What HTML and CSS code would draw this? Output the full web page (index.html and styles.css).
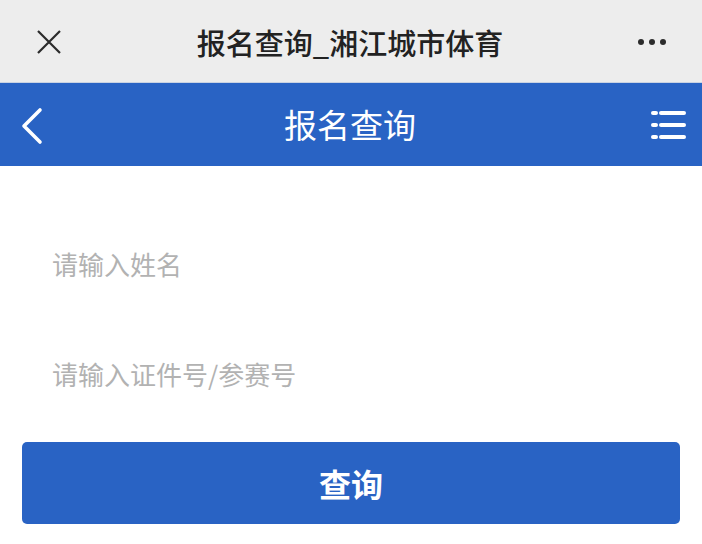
FILE: index.html
```html
<!DOCTYPE html>
<html lang="zh-CN">
<head>
    <meta charset="UTF-8">
    <meta name="viewport" content="width=device-width, initial-scale=1.0">
    <title>报名查询_湘江城市体育</title>
    <link rel="stylesheet" href="styles.css">
</head>
<body>
    <div class="wx-bar">
        <span class="wx-close">
            <svg width="26" height="26" viewBox="0 0 26 26">
                <path d="M2 2 L24 24 M24 2 L2 24" stroke="#2b2b2b" stroke-width="2.2" fill="none"/>
            </svg>
        </span>
        <span class="wx-title">报名查询_湘江城市体育</span>
        <span class="wx-more">
            <i></i><i></i><i></i>
        </span>
    </div>

    <header class="top-nav">
        <a class="nav-back">
            <svg width="24" height="38" viewBox="0 0 24 38">
                <polyline points="19,3 3,19 19,35" stroke="#fff" stroke-width="3.6" stroke-linecap="round" stroke-linejoin="round" fill="none"/>
            </svg>
        </a>
        <h1>报名查询</h1>
        <a class="nav-menu">
            <svg width="36" height="30" viewBox="0 0 36 30">
                <g stroke="#fff" stroke-width="4" stroke-linecap="round">
                    <line x1="2" y1="3" x2="5" y2="3"/>
                    <line x1="10" y1="3" x2="33" y2="3"/>
                    <line x1="2" y1="15" x2="5" y2="15"/>
                    <line x1="10" y1="15" x2="33" y2="15"/>
                    <line x1="2" y1="27" x2="5" y2="27"/>
                    <line x1="10" y1="27" x2="33" y2="27"/>
                </g>
            </svg>
        </a>
    </header>

    <form class="query-form">
        <input class="field" type="text" placeholder="请输入姓名">
        <input class="field" type="text" placeholder="请输入证件号/参赛号">
        <button type="button" class="btn-query">查询</button>
    </form>
</body>
</html>
```

FILE: styles.css
```css
:root {
    --wx-bg: #ededed;
    --main-blue: #2963c4;
    --text-dark: #222;
    --placeholder: #b2b2b2;
    --font-family: "Noto Sans CJK SC", "Noto Sans", sans-serif;
}

* {
    box-sizing: border-box;
}

body {
    margin: 0;
    background: #fff;
    font-family: var(--font-family);
    width: 702px;
    height: 544px;
    overflow: hidden;
}

/* 微信顶部栏 */
.wx-bar {
    height: 83px;
    background: var(--wx-bg);
    border-bottom: 1px solid #c9d3e3;
    display: flex;
    align-items: center;
    justify-content: space-between;
    padding: 0 30px 0 36px;
}

.wx-close {
    display: flex;
    width: 26px;
    height: 26px;
    margin-top: 2px;
}

.wx-title {
    font-size: 29px;
    line-height: 1;
    color: var(--text-dark);
    font-weight: 500;
    margin: 2px 0 0 0;
}

.wx-more {
    display: flex;
    gap: 5px;
    width: 34px;
    margin-top: 2px;
}

.wx-more i {
    width: 6px;
    height: 6px;
    border-radius: 50%;
    background: #2b2b2b;
}

/* 页面导航 */
.top-nav {
    height: 83px;
    background: var(--main-blue);
    display: flex;
    align-items: center;
    justify-content: space-between;
    padding: 0 15px 0 21px;
}

.nav-back {
    display: flex;
    margin-top: 2px;
}

.top-nav h1 {
    margin: 0 0 0 4px;
    font-size: 33px;
    line-height: 1;
    font-weight: 400;
    color: #fff;
}

.nav-menu {
    display: flex;
    margin-top: 1px;
}

/* 查询表单 */
.query-form {
    display: flex;
    flex-direction: column;
    padding: 42px 22px 0;
}

.field {
    height: 110px;
    border: none;
    outline: none;
    padding: 0 0 0 30px;
    font-size: 26px;
    font-family: var(--font-family);
    color: var(--text-dark);
    background: transparent;
}

.field::placeholder {
    color: var(--placeholder);
}

.btn-query {
    margin-top: 14px;
    height: 82px;
    border: none;
    border-radius: 5px;
    background: var(--main-blue);
    color: #fff;
    font-size: 32px;
    font-weight: 700;
    font-family: var(--font-family);
    cursor: pointer;
}
```
